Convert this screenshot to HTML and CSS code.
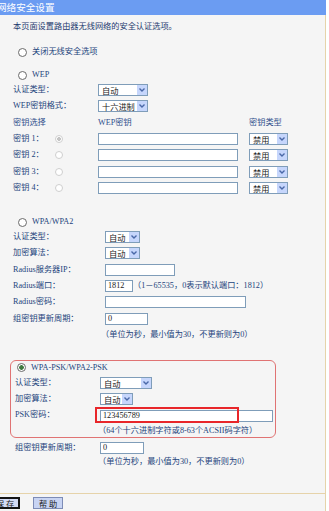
FILE: index.html
```html
<!DOCTYPE html>
<html lang="zh-CN">
<head>
<meta charset="utf-8">
<title>网络安全设置</title>
<link rel="stylesheet" href="styles.css">
</head>
<body>
<div class="page">
  <div class="titlebar">网络安全设置</div>
  <div class="content">
    <div class="intro">本页面设置路由器无线网络的安全认证选项。</div>

    <div class="opt opt-off"><span class="radio"></span><span>关闭无线安全选项</span></div>
    <div class="opt opt-wep"><span class="radio"></span><span class="lat">WEP</span></div>

    <div class="sec sec-wep">
      <div class="row"><span class="lbl">认证类型：</span><span class="sel w50"><span>自动</span><span class="arr"><svg width="8" height="6" viewBox="0 0 8 6"><path d="M1.5 1.5 L4 4 L6.5 1.5" fill="none" stroke="#4a68a8" stroke-width="1.4"/></svg></span></span></div>
      <div class="row"><span class="lbl">WEP密钥格式：</span><span class="sel w50"><span>十六进制</span><span class="arr"><svg width="8" height="6" viewBox="0 0 8 6"><path d="M1.5 1.5 L4 4 L6.5 1.5" fill="none" stroke="#4a68a8" stroke-width="1.4"/></svg></span></span></div>
      <div class="row hdr"><span class="lbl">密钥选择</span><span class="keycol">WEP密钥</span><span>密钥类型</span></div>
      <div class="row"><span class="lbl"><span class="klbl">密钥 1：</span><span class="radio kr on"></span></span><input class="inp w140" type="text" value=""><span class="sel w39 kt"><span>禁用</span><span class="arr"><svg width="8" height="6" viewBox="0 0 8 6"><path d="M1.5 1.5 L4 4 L6.5 1.5" fill="none" stroke="#4a68a8" stroke-width="1.4"/></svg></span></span></div>
      <div class="row"><span class="lbl"><span class="klbl">密钥 2：</span><span class="radio kr"></span></span><input class="inp w140" type="text" value=""><span class="sel w39 kt"><span>禁用</span><span class="arr"><svg width="8" height="6" viewBox="0 0 8 6"><path d="M1.5 1.5 L4 4 L6.5 1.5" fill="none" stroke="#4a68a8" stroke-width="1.4"/></svg></span></span></div>
      <div class="row"><span class="lbl"><span class="klbl">密钥 3：</span><span class="radio kr"></span></span><input class="inp w140" type="text" value=""><span class="sel w39 kt"><span>禁用</span><span class="arr"><svg width="8" height="6" viewBox="0 0 8 6"><path d="M1.5 1.5 L4 4 L6.5 1.5" fill="none" stroke="#4a68a8" stroke-width="1.4"/></svg></span></span></div>
      <div class="row"><span class="lbl"><span class="klbl">密钥 4：</span><span class="radio kr"></span></span><input class="inp w140" type="text" value=""><span class="sel w39 kt"><span>禁用</span><span class="arr"><svg width="8" height="6" viewBox="0 0 8 6"><path d="M1.5 1.5 L4 4 L6.5 1.5" fill="none" stroke="#4a68a8" stroke-width="1.4"/></svg></span></span></div>
    </div>

    <div class="opt opt-wpa"><span class="radio"></span><span class="lat">WPA/WPA2</span></div>

    <div class="sec sec-wpa">
      <div class="row"><span class="lbl">认证类型：</span><span class="sel w35"><span>自动</span><span class="arr"><svg width="8" height="6" viewBox="0 0 8 6"><path d="M1.5 1.5 L4 4 L6.5 1.5" fill="none" stroke="#4a68a8" stroke-width="1.4"/></svg></span></span></div>
      <div class="row"><span class="lbl">加密算法：</span><span class="sel w35"><span>自动</span><span class="arr"><svg width="8" height="6" viewBox="0 0 8 6"><path d="M1.5 1.5 L4 4 L6.5 1.5" fill="none" stroke="#4a68a8" stroke-width="1.4"/></svg></span></span></div>
      <div class="row"><span class="lbl">Radius服务器IP：</span><input class="inp w70" type="text" value=""></div>
      <div class="row"><span class="lbl">Radius端口：</span><input class="inp w28" type="text" value="1812"><span class="hint">（1－65535，0表示默认端口：1812）</span></div>
      <div class="row"><span class="lbl">Radius密码：</span><input class="inp w141" type="text" value=""></div>
      <div class="row"><span class="lbl">组密钥更新周期：</span><input class="inp w43" type="text" value="0"></div>
      <div class="note note-wpa">（单位为秒，最小值为30，不更新则为0）</div>
    </div>

    <div class="pskbox">
      <div class="opt opt-psk"><span class="radio on"></span><span class="lat">WPA-PSK/WPA2-PSK</span></div>
      <div class="sec sec-psk">
        <div class="row"><span class="lbl">认证类型：</span><span class="sel w52"><span>自动</span><span class="arr"><svg width="8" height="6" viewBox="0 0 8 6"><path d="M1.5 1.5 L4 4 L6.5 1.5" fill="none" stroke="#4a68a8" stroke-width="1.4"/></svg></span></span></div>
        <div class="row"><span class="lbl">加密算法：</span><span class="sel w33"><span>自动</span><span class="arr"><svg width="8" height="6" viewBox="0 0 8 6"><path d="M1.5 1.5 L4 4 L6.5 1.5" fill="none" stroke="#4a68a8" stroke-width="1.4"/></svg></span></span></div>
        <div class="row"><span class="lbl">PSK密码：</span><span class="pskwrap"><input class="inp w173" type="text" value="123456789"><span class="redmark"></span></span></div>
        <div class="note note-psk">（64个十六进制字符或8-63个ACSII码字符）</div>
      </div>
    </div>

    <div class="sec sec-after">
      <div class="row"><span class="lbl">组密钥更新周期：</span><input class="inp w44" type="text" value="0"></div>
      <div class="note note-after">（单位为秒，最小值为30，不更新则为0）</div>
    </div>

    <div class="rule"></div>
    <div class="btns">
      <button class="btn focus" type="button">保 存</button>
      <button class="btn" type="button">帮 助</button>
    </div>
  </div>
</div>
</body>
</html>
```
FILE: styles.css
```css
* { box-sizing: border-box; }
html, body { margin: 0; padding: 0; background: #ffffff; }
body {
  width: 329px;
  height: 511px;
  overflow: hidden;
  font-family: "Liberation Serif", "Noto Sans CJK SC", serif;
  font-size: 8.2px;
  line-height: 1;
  color: #24447c;
}
.page { width: 326px; }
.titlebar {
  height: 15px;
  background: #6b9cf2;
  color: #ffffff;
  font-family: "Noto Sans CJK SC", sans-serif;
  font-size: 9.6px;
  line-height: 15px;
  text-indent: -3px;
  white-space: nowrap;
  overflow: hidden;
}
.content {
  background: #f5f5f5;
  border-right: 1px solid #e6d3aa;
  padding-left: 13px;
  height: 496px;
  overflow: hidden;
}
.intro { height: 12px; margin-top: 6px; display: flex; align-items: center; color: #1f3a6f; white-space: nowrap; }

.opt { display: flex; align-items: center; height: 12px; white-space: nowrap; }
.opt-off { margin-top: 13px; }
.opt-wep { margin-top: 11px; }
.opt-wpa { margin-top: 20px; }
.opt-psk { margin-top: 1px; }

.radio {
  flex: none;
  width: 9px;
  height: 9px;
  border: 1px solid #6a6a6a;
  border-radius: 50%;
  background: #ffffff;
  margin-left: 5px;
  margin-right: 5px;
}
.radio.on { background: radial-gradient(circle, #3f7a3f 0 2px, #ffffff 2.6px); }
.opt-psk .radio { margin-left: 2px; }
.radio.kr {
  width: 8px;
  height: 8px;
  border-color: #cfcfcf;
  margin: 0;
}
.radio.kr.on { background: radial-gradient(circle, #c4c4c4 0 1.6px, #ffffff 2.2px); }

.sec-wep { margin-top: 1px; }
.sec-wpa { margin-top: 0.5px; }
.sec-psk { margin-top: 0.8px; }
.sec-after { margin-top: 1.8px; padding-left: 2px; }

.row { display: flex; align-items: center; height: 16.33px; white-space: nowrap; }
.lbl { flex: none; display: flex; align-items: center; }
.sec-wep .lbl { width: 85px; }
.sec-wpa .lbl { width: 92px; }
.sec-psk .lbl, .sec-after .lbl { width: 85px; }
.klbl { width: 41.5px; }
.keycol { width: 151px; flex: none; }
.hdr { color: #2f4f8c; }

.sel {
  flex: none;
  display: flex;
  align-items: center;
  justify-content: space-between;
  height: 12px;
  border: 1px solid #7f9db9;
  background: #ffffff;
  padding-left: 3px;
  color: #1a1a1a;
  font-family: "Noto Sans CJK SC", sans-serif;
}
.arr {
  width: 10px;
  height: 10px;
  background: #c6d6fc;
  display: flex;
  align-items: center;
  justify-content: center;
}
.kt { margin-left: 11px; }

.inp {
  flex: none;
  height: 12px;
  margin: 0;
  padding: 0 2px;
  border: 1px solid #7f9db9;
  background: #ffffff;
  font-family: "Liberation Serif", serif;
  font-size: 8.2px;
  color: #1a1a1a;
  outline: none;
}
.w28 { width: 28px; }
.w33 { width: 33px; }
.w35 { width: 35px; }
.w39 { width: 39px; }
.w43 { width: 43px; }
.w44 { width: 44px; }
.w50 { width: 50px; }
.w52 { width: 52px; }
.w70 { width: 70px; }
.w140 { width: 140px; }
.w141 { width: 141px; }
.w173 { width: 173px; }

.hint { margin-left: 0; }
.note { height: 12px; display: flex; align-items: center; white-space: nowrap; }
.note-wpa { margin-top: 2.2px; padding-left: 88px; }
.note-psk { margin-top: 2.2px; height: 11px; padding-left: 83px; }
.note-after { padding-left: 83px; }

.pskbox {
  margin-top: 19px;
  margin-left: -3px;
  width: 266px;
  border: 1px solid #e07373;
  border-radius: 6px;
  padding-left: 4px;
}
.pskwrap { position: relative; display: flex; }
.redmark {
  position: absolute;
  left: -5px;
  top: -3px;
  width: 144px;
  height: 16px;
  border: 2px solid #e8262a;
}

.rule { margin-top: 24.8px; margin-left: -13px; border-top: 1px solid #e6d3aa; height: 0; }
.btns { display: flex; gap: 13px; margin-top: 3px; margin-left: -23px; }
.btn {
  width: 30px;
  height: 12px;
  margin: 0;
  padding: 0;
  border: 1px solid #7d8cb6;
  background: #c8d4f3;
  color: #1a1a1a;
  font-family: "Noto Sans CJK SC", sans-serif;
  font-size: 8.2px;
  line-height: 1;
  display: flex;
  align-items: center;
  justify-content: center;
}
.btn.focus { border: 2px solid #151515; background: #d3dbf4; }
```
